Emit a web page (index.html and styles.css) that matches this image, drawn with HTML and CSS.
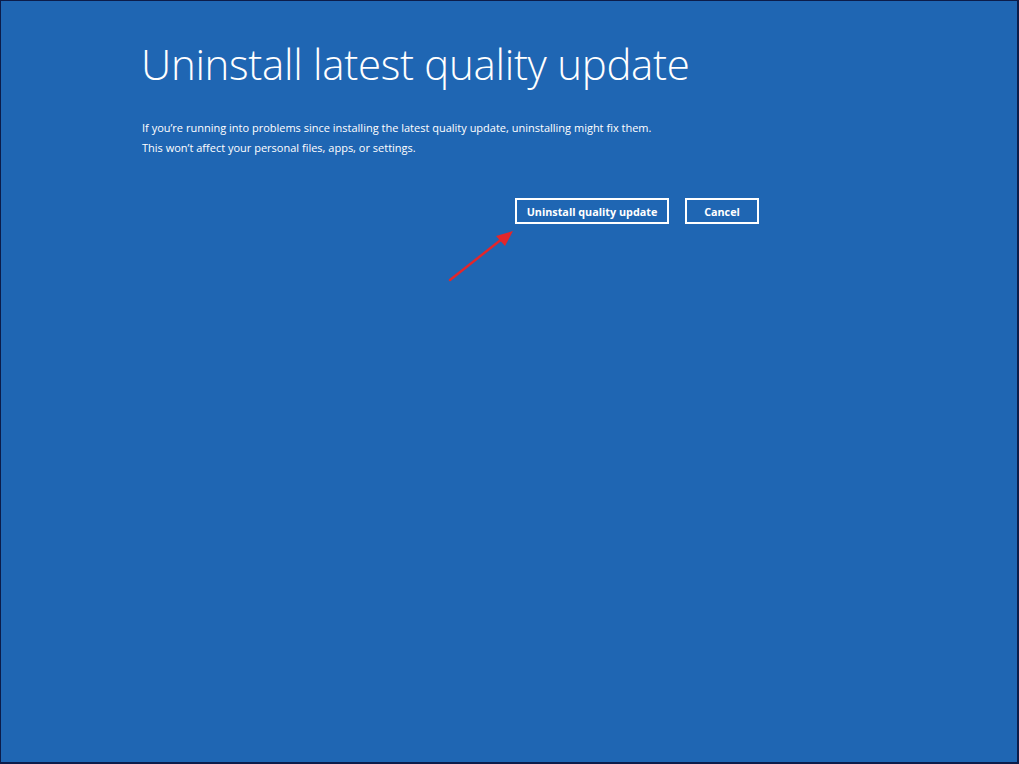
FILE: index.html
```html
<!DOCTYPE html>
<html>
<head>
<meta charset="utf-8">
<link rel="stylesheet" href="styles.css">
</head>
<body>
<div class="screen">
  <div class="content">
    <h1 class="title">Uninstall latest quality update</h1>
    <p class="desc">If you’re running into problems since installing the latest quality update, uninstalling might fix them.<br>This won’t affect your personal files, apps, or settings.</p>
    <div class="actions">
      <button class="btn btn-primary">Uninstall quality update</button>
      <button class="btn btn-cancel">Cancel</button>
    </div>
  </div>
  <svg class="arrow" width="80" height="70" viewBox="0 0 80 70">
    <line x1="9" y1="59" x2="66" y2="14" stroke="#e3262b" stroke-width="2.4" stroke-linecap="round"/>
    <polygon points="72,10 55,15 64,25" fill="#e3262b"/>
  </svg>
</div>
</body>
</html>
```
FILE: styles.css
```css
html, body {
  margin: 0;
  padding: 0;
  background: #0c1c4a;
}
.screen {
  position: relative;
  box-sizing: border-box;
  width: 1019px;
  height: 764px;
  background: #1f66b3;
  border-top: 1px solid #0c1c4a;
  border-left: 1px solid #0c1c4a;
  border-right: 2px solid #0c1c4a;
  border-bottom: 2px solid #0c1c4a;
  font-family: "Open Sans", "Liberation Sans", sans-serif;
  color: #ffffff;
}
.content {
  width: 618px;
  padding-left: 140px;
  padding-top: 30px;
}
.title {
  margin: 0;
  font-weight: 300;
  font-size: 42px;
  line-height: 66px;
  letter-spacing: -0.3px;
}
.desc {
  margin: 21px 0 0 1px;
  font-size: 11px;
  line-height: 20px;
}
.actions {
  display: flex;
  justify-content: flex-end;
  gap: 16px;
  margin-top: 40px;
}
.btn {
  background: transparent;
  border: 2px solid #ffffff;
  color: #ffffff;
  font-family: "Open Sans", "Liberation Sans", sans-serif;
  font-weight: 700;
  font-size: 10.8px;
  height: 26px;
  padding: 0;
  white-space: nowrap;
}
.btn-primary { width: 154px; }
.btn-cancel { width: 74px; }
.arrow {
  position: absolute;
  left: 440px;
  top: 220px;
}
```
